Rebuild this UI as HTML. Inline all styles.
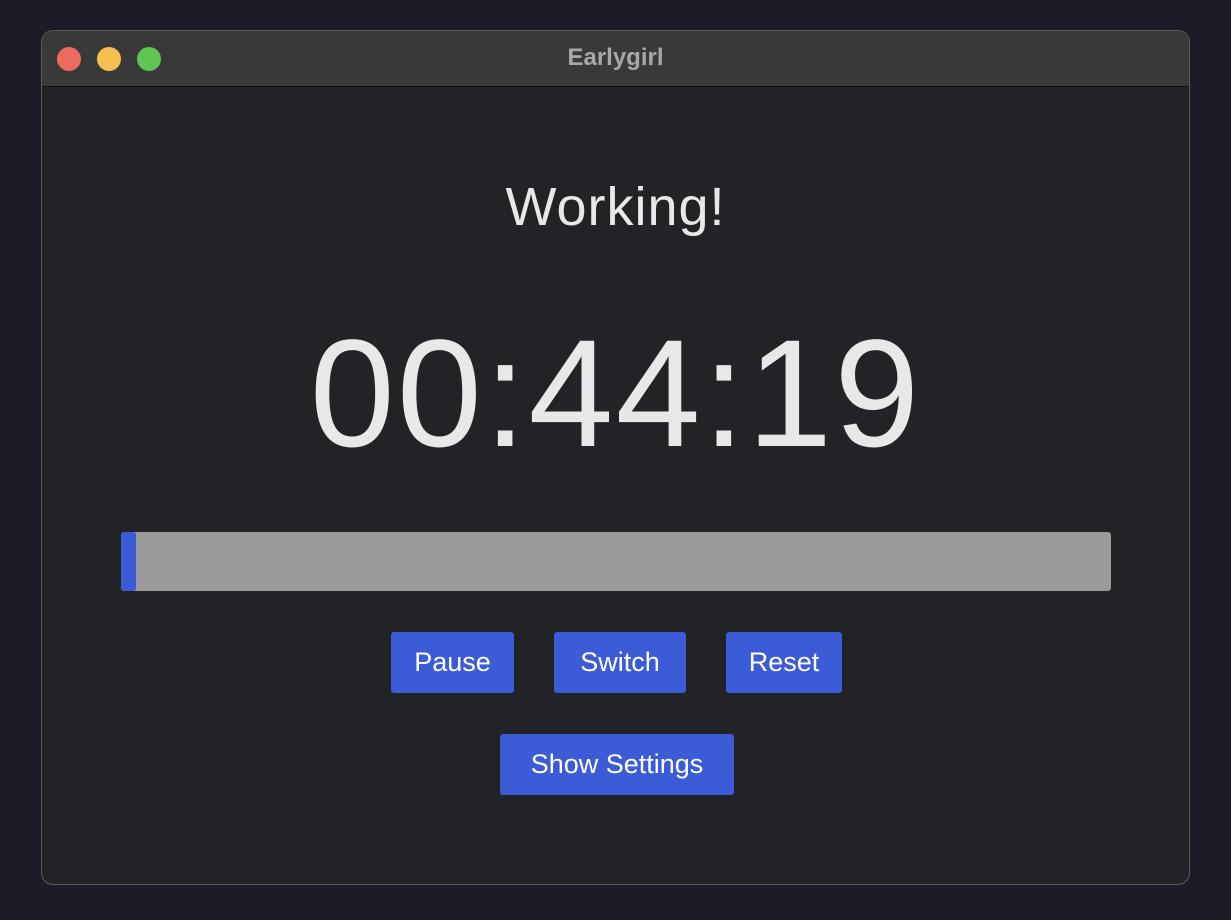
<!DOCTYPE html>
<html><head><style>
html,body{margin:0;width:1231px;height:920px;background:#1c1c28;overflow:hidden;font-family:"Liberation Sans",sans-serif}
.win{position:absolute;left:41px;top:30px;width:1147px;height:853px;border:1px solid #5a5a5e;border-radius:12px;background:#222327;overflow:hidden}
.tb{height:55px;background:#393939;border-bottom:1px solid #0e0e0e;position:relative}
.dot{position:absolute;top:16px;width:24px;height:24px;border-radius:50%}
.title{position:absolute;left:0;right:0;top:13px;text-align:center;color:#a8a8a8;font-weight:bold;font-size:24px}
.t{position:absolute;left:0;right:0;text-align:center;color:#e8e8e8}
.bar{position:absolute;left:79px;top:501px;width:990px;height:59px;background:#9a9a9a;border-radius:3px;overflow:hidden}
.bar i{position:absolute;left:0;top:0;width:15px;height:59px;background:#3c5bd6;border-radius:3px}
.b{position:absolute;height:61px;background:#3c5bd6;border-radius:3px;color:#fff;font-size:27px;line-height:61px;text-align:center}
</style></head><body>
<div class="win">
<div class="tb">
<div class="dot" style="left:15px;background:#ee6a5f"></div>
<div class="dot" style="left:55px;background:#f5bf4f"></div>
<div class="dot" style="left:95px;background:#61c554"></div>
<div class="title">Earlygirl</div>
</div>
<div class="t" style="top:145px;font-size:54px;letter-spacing:1px">Working!</div>
<div class="t" style="top:263px;font-size:153px;letter-spacing:2px;line-height:200px">00:44:19</div>
<div class="bar"><i></i></div>
<div class="b" style="left:349px;top:601px;width:123px">Pause</div>
<div class="b" style="left:512px;top:601px;width:132px">Switch</div>
<div class="b" style="left:684px;top:601px;width:116px">Reset</div>
<div class="b" style="left:458px;top:703px;width:234px">Show Settings</div>
</div>
</body></html>
